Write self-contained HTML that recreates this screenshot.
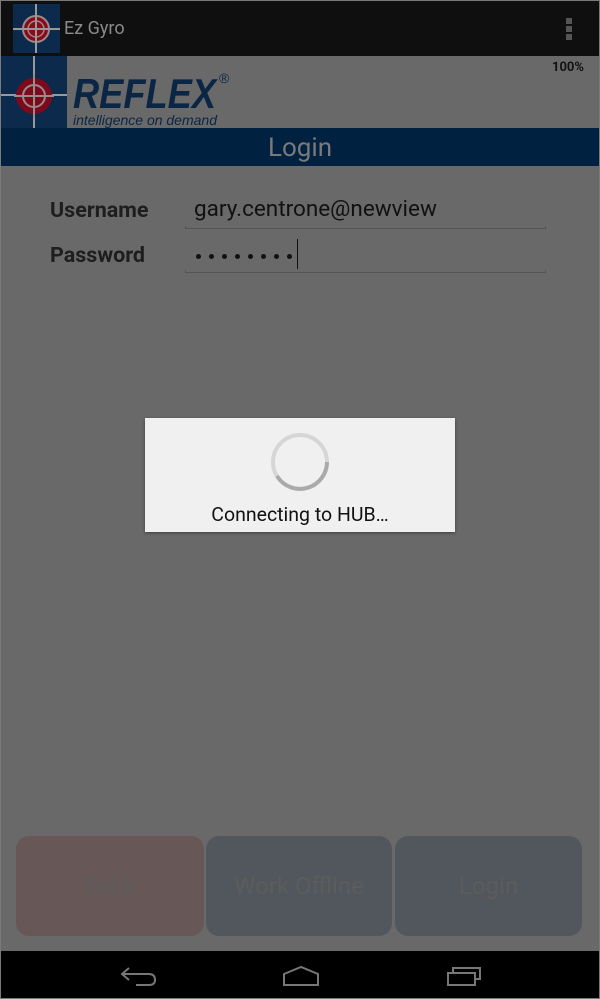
<!DOCTYPE html>
<html><head><style>
*{margin:0;padding:0;box-sizing:border-box}
body{width:600px;height:999px;background:#7a7a7a;font-family:"Roboto","Liberation Sans",sans-serif;position:relative;overflow:hidden}
.scr{position:absolute;left:1px;top:1px;width:598px;height:997px;background:#696969}
.ab{position:absolute;left:0;top:0;width:598px;height:55px;background:#0f0f0f}
.a{position:absolute}
.lbl{position:absolute;font-weight:bold;font-size:21.5px;color:#1e1e1e}
.btn{position:absolute;top:835px;height:100px;border-radius:13px;font-size:24px;color:#5c5c5c;display:flex;align-items:center;justify-content:center}
.dot{position:absolute;top:253px;width:5px;height:5px;border-radius:50%;background:#111}
</style></head><body>
<div class="scr">
<div class="ab">
 <svg class="a" style="left:12px;top:3px" width="47" height="49" viewBox="0 0 47 49">
  <rect width="47" height="49" fill="#0c2a4c"/>
  <circle cx="23" cy="25" r="13" fill="#8a0a1a" stroke="#9a8a8a" stroke-width="2"/>
  <circle cx="23" cy="25" r="8" fill="none" stroke="#9a8a8a" stroke-width="1.5"/>
  <path d="M23 0V49M0 25H47" stroke="#999" stroke-width="2"/>
 </svg>
 <div class="a" style="left:63px;top:17px;font-size:18px;color:#8a8a8a">Ez Gyro</div>
 <div class="a" style="left:565px;top:17px;width:6px;height:6px;background:#555;box-shadow:0 8px 0 #555,0 16px 0 #555"></div>
</div>
<div class="a" style="left:551px;top:59px;font-size:13px;color:#111;font-weight:bold">100%</div>
<svg class="a" style="left:0;top:55px" width="240" height="72" viewBox="0 0 240 72">
 <rect x="0" y="0" width="66" height="72" fill="#0c2a4c"/>
 <path d="M33 0V72M0 39H66" stroke="#999" stroke-width="2"/>
 <circle cx="33" cy="40" r="18" fill="#7d0a1c"/>
 <circle cx="33" cy="40" r="11" fill="none" stroke="#9a8a8a" stroke-width="2"/>
 <path d="M33 18V62M13 40H53" stroke="#9a8a8a" stroke-width="2"/>
 <text x="72" y="52" font-family="Liberation Sans" font-weight="bold" font-style="italic" font-size="42" fill="#0b2545" textLength="143" lengthAdjust="spacingAndGlyphs">REFLEX</text>
 <text x="218" y="27" font-family="Liberation Sans" font-size="14" fill="#0b2545">®</text>
 <text x="72" y="69" font-family="Liberation Sans" font-style="italic" font-size="14" fill="#0b2545" textLength="144" lengthAdjust="spacingAndGlyphs">intelligence on demand</text>
</svg>
<div class="a" style="left:0;top:127px;width:598px;height:38px;background:#00213f;color:#7a7a7a;font-size:26px;text-align:center;line-height:40px">Login</div>
<div class="lbl" style="left:49px;top:197px">Username</div>
<div class="lbl" style="left:49px;top:242px">Password</div>
<div class="a" style="left:193px;top:195px;font-size:22.5px;color:#111">gary.centrone@newview</div>
<div class="a" style="left:184px;top:225px;width:361px;height:3px;border:1px solid #555;border-top:none"></div>
<div class="dot" style="left:195px"></div><div class="dot" style="left:208px"></div><div class="dot" style="left:221px"></div><div class="dot" style="left:234px"></div><div class="dot" style="left:247px"></div><div class="dot" style="left:260px"></div><div class="dot" style="left:273px"></div><div class="dot" style="left:286px"></div>
<div class="a" style="left:296px;top:238px;width:1px;height:30px;background:#111"></div>
<div class="a" style="left:184px;top:269px;width:361px;height:3px;border:1px solid #555;border-top:none"></div>
<div class="a" style="left:144px;top:417px;width:310px;height:114px;background:#f0f0f0;box-shadow:0 1px 3px rgba(0,0,0,.4)">
 <svg class="a" style="left:125px;top:14px" width="60" height="60" viewBox="0 0 60 60">
  <circle cx="30" cy="30" r="27" fill="none" stroke="#d6d6d6" stroke-width="4"/>
  <path d="M57 30A27 27 0 0 1 7 44" fill="none" stroke="#aaa" stroke-width="4"/>
 </svg>
 <div class="a" style="left:0;top:85px;width:310px;text-align:center;font-size:19.5px;color:#111">Connecting to HUB…</div>
</div>
<div class="btn" style="left:15px;width:188px;background:#685757">Back</div>
<div class="btn" style="left:205px;width:186px;background:#52575e">Work Offline</div>
<div class="btn" style="left:394px;width:187px;background:#52575e">Login</div>
<div class="a" style="left:0;top:950px;width:598px;height:47px;background:#000">
 <svg class="a" style="left:118px;top:14px" width="40" height="22" viewBox="0 0 40 22"><path d="M10 3L3 9L10 15M3 9H30Q36 9 36 15Q36 20 30 20H17" fill="none" stroke="#777" stroke-width="2"/></svg>
 <svg class="a" style="left:280px;top:13px" width="40" height="24" viewBox="0 0 40 24"><path d="M3 21V10L20 3L37 10V21Z" fill="none" stroke="#777" stroke-width="2"/></svg>
 <svg class="a" style="left:444px;top:13px" width="40" height="24" viewBox="0 0 40 24"><path d="M3 9H30V21H3Z M8 9V4H35V15H30" fill="none" stroke="#777" stroke-width="2"/></svg>
</div>
</div>
</body></html>
